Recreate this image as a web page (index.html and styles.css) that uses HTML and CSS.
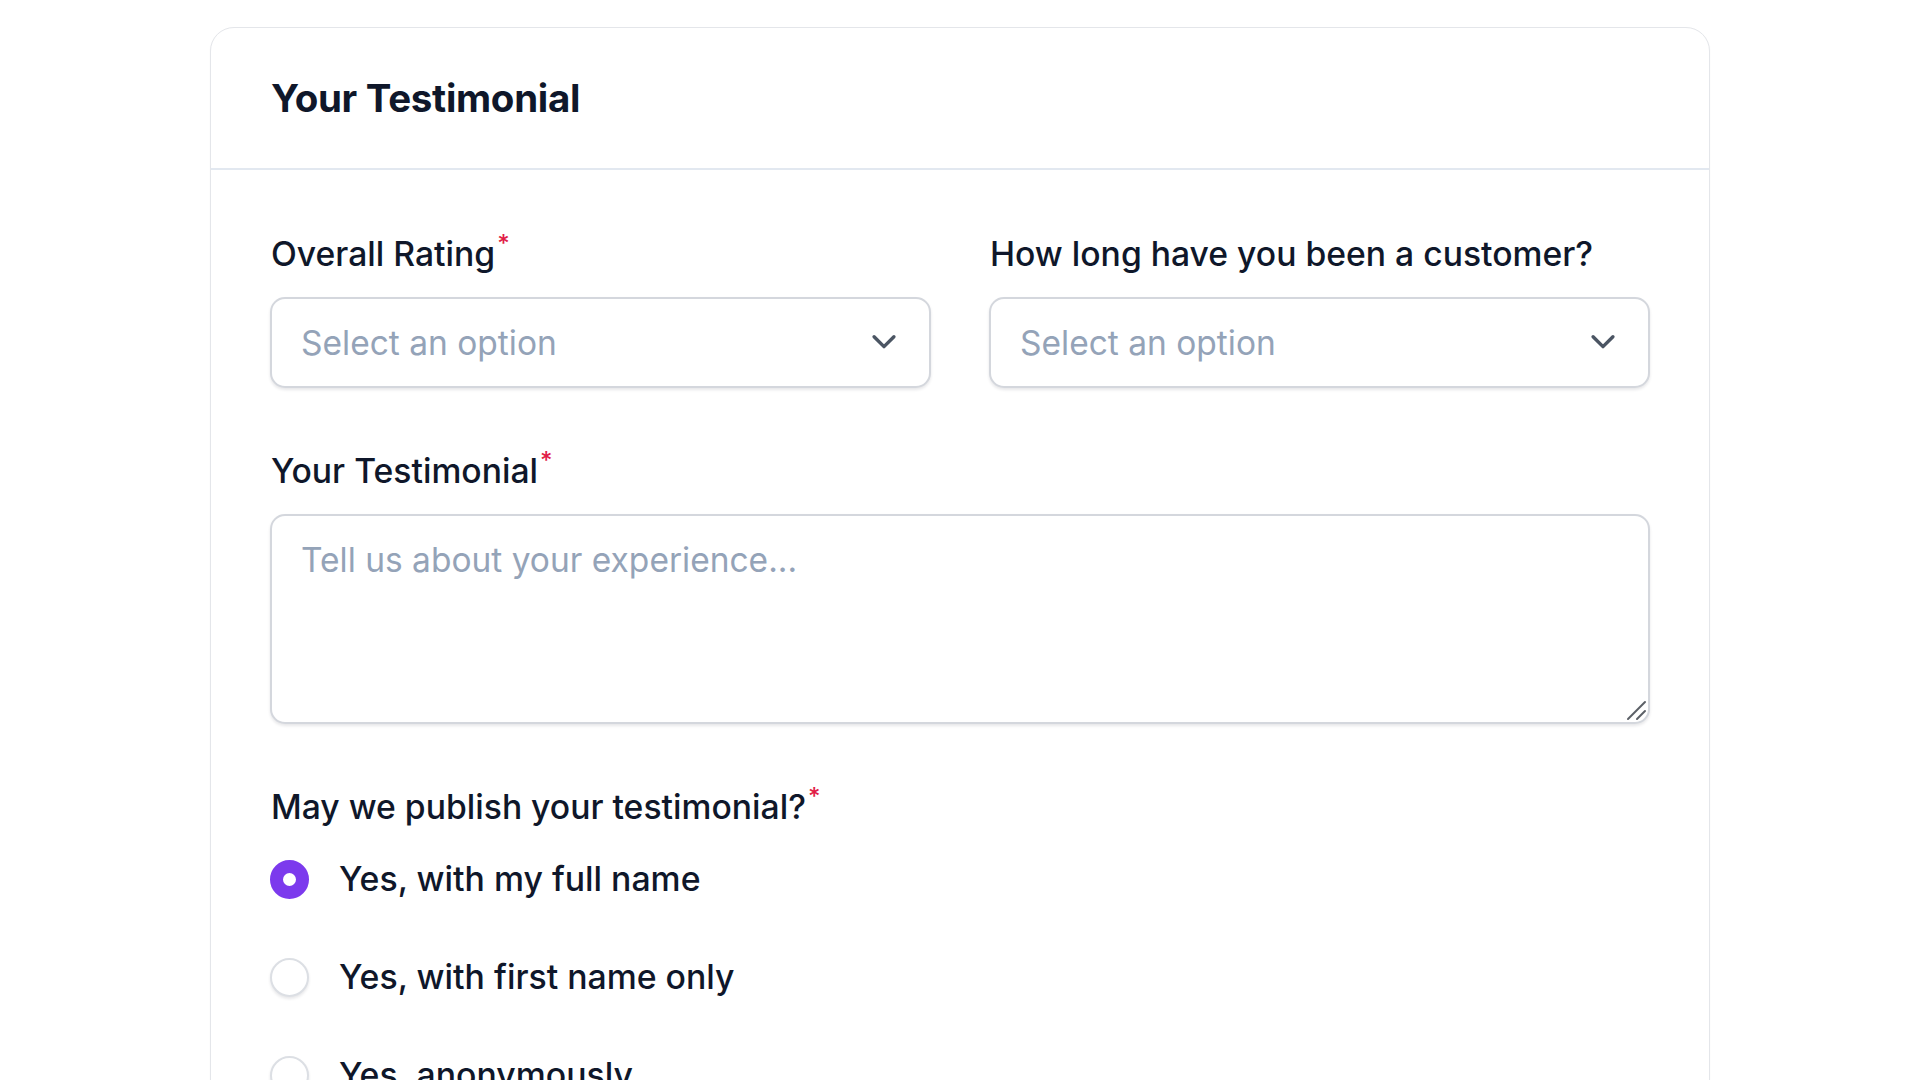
FILE: index.html
```html
<!DOCTYPE html>
<html lang="en">
<head>
    <meta charset="UTF-8">
    <meta name="viewport" content="width=device-width, initial-scale=1.0">
    <title>Your Testimonial</title>
    <link rel="stylesheet" href="styles.css">
</head>
<body>
    <div class="page">
        <form class="card">
            <div class="card-header">
                <h2>Your Testimonial</h2>
            </div>

            <div class="card-body">
                <div class="row">
                    <div class="field">
                        <label class="label" for="rating">Overall Rating<span class="req">*</span></label>
                        <div class="select-wrap">
                            <select id="rating" class="select">
                                <option>Select an option</option>
                                <option>5 - Excellent</option>
                                <option>4 - Good</option>
                                <option>3 - Average</option>
                            </select>
                            <svg class="chevron" viewBox="0 0 24 24" fill="none" stroke="currentColor" stroke-width="2.4" stroke-linecap="round" stroke-linejoin="round">
                                <path d="M5 9l7 7 7-7"/>
                            </svg>
                        </div>
                    </div>

                    <div class="field">
                        <label class="label" for="tenure">How long have you been a customer?</label>
                        <div class="select-wrap">
                            <select id="tenure" class="select">
                                <option>Select an option</option>
                                <option>Less than 6 months</option>
                                <option>6 - 12 months</option>
                                <option>1 - 3 years</option>
                            </select>
                            <svg class="chevron" viewBox="0 0 24 24" fill="none" stroke="currentColor" stroke-width="2.4" stroke-linecap="round" stroke-linejoin="round">
                                <path d="M5 9l7 7 7-7"/>
                            </svg>
                        </div>
                    </div>
                </div>

                <div class="field">
                    <label class="label" for="testimonial">Your Testimonial<span class="req">*</span></label>
                    <div class="textarea-wrap">
                        <textarea id="testimonial" class="textarea" placeholder="Tell us about your experience..."></textarea>
                        <svg class="grip" viewBox="0 0 22 22" fill="none" stroke="#5b5f66" stroke-width="2" stroke-linecap="round">
                            <path d="M3 20L20 3"/>
                            <path d="M12 20L20 12"/>
                        </svg>
                    </div>
                </div>

                <div class="field">
                    <span class="label">May we publish your testimonial?<span class="req">*</span></span>
                    <div class="radios">
                        <label class="radio">
                            <input type="radio" name="publish" checked>
                            <span class="dot"></span>
                            <span>Yes, with my full name</span>
                        </label>
                        <label class="radio">
                            <input type="radio" name="publish">
                            <span class="dot"></span>
                            <span>Yes, with first name only</span>
                        </label>
                        <label class="radio">
                            <input type="radio" name="publish">
                            <span class="dot"></span>
                            <span>Yes, anonymously</span>
                        </label>
                    </div>
                </div>
            </div>
        </form>
    </div>
</body>
</html>
```

FILE: styles.css
```css
:root {
    --text: #0f172a;
    --muted: #94a3b8;
    --border: #d4d7dd;
    --line: #e2e8f0;
    --accent: #7c3aed;
    --required: #e11d48;
}

body {
    margin: 0;
    background: #ffffff;
    color: var(--text);
    font-family: Inter, "Noto Sans", sans-serif;
}

.page {
    padding: 27px 0 60px;
}

.card {
    max-width: 1498px;
    margin: 0 auto;
    border: 1px solid #e4e6ea;
    border-radius: 24px;
    background: #fff;
    box-shadow: 0 1px 2px rgba(15, 23, 42, 0.04);
}

.card-header {
    padding: 0 60px;
    height: 140px;
    display: flex;
    align-items: center;
    border-bottom: 2px solid var(--line);
}

.card-header h2 {
    margin: 0;
    font-size: 38.5px;
    font-weight: 700;
    letter-spacing: -0.3px;
}

.card-body {
    padding: 64px 59px 60px;
    display: flex;
    flex-direction: column;
    gap: 63px;
}

.row {
    display: grid;
    grid-template-columns: 1fr 1fr;
    gap: 58px;
}

.field {
    display: flex;
    flex-direction: column;
}

.label {
    font-size: 33.7px;
    font-weight: 500;
    line-height: 40px;
    margin: 0 0 23px 1px;
}

.req {
    position: relative;
    top: -14px;
    margin-left: 2px;
    font-size: 24px;
    line-height: 0;
    color: var(--required);
}

.select-wrap,
.textarea-wrap {
    position: relative;
    display: flex;
}

.select {
    width: 100%;
    height: 91px;
    appearance: none;
    -webkit-appearance: none;
    border: 2px solid var(--border);
    border-radius: 15px;
    background: #fff;
    padding: 0 70px 0 29px;
    font-family: inherit;
    font-size: 33.5px;
    color: var(--muted);
    box-shadow: 0 2px 3px rgba(15, 23, 42, 0.1);
}

.chevron {
    position: absolute;
    right: 30px;
    top: 50%;
    width: 34px;
    height: 34px;
    margin-top: -19px;
    color: #4b5563;
    pointer-events: none;
}

.textarea {
    width: 100%;
    height: 210px;
    box-sizing: border-box;
    border: 2px solid var(--border);
    border-radius: 15px;
    padding: 19px 29px;
    font-family: inherit;
    font-size: 33.5px;
    line-height: 1.5;
    color: var(--text);
    resize: none;
    box-shadow: 0 2px 3px rgba(15, 23, 42, 0.1);
}

.textarea::placeholder {
    color: var(--muted);
}

.grip {
    position: absolute;
    right: 3px;
    bottom: 3px;
    width: 22px;
    height: 22px;
    pointer-events: none;
}

.radios {
    display: flex;
    flex-direction: column;
    gap: 50px;
    margin-top: 5px;
}

.radio {
    display: flex;
    align-items: center;
    gap: 30px;
    font-size: 33.8px;
    font-weight: 500;
    line-height: 48px;
}

.radio input {
    display: none;
}

.dot {
    width: 39px;
    height: 39px;
    box-sizing: border-box;
    border-radius: 50%;
    border: 2px solid #dcdfe4;
    background: #fff;
    box-shadow: 0 2px 3px rgba(15, 23, 42, 0.1);
    flex-shrink: 0;
}

.radio input:checked + .dot {
    border: 13px solid var(--accent);
    box-shadow: none;
}
```
